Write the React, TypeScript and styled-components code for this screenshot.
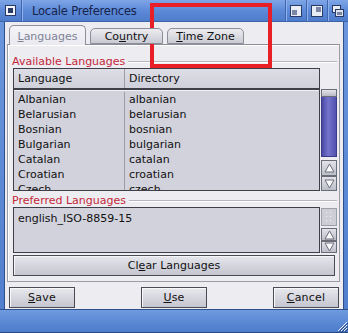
import styled, {createGlobalStyle} from "styled-components";

const GlobalStyle = createGlobalStyle`
  html, body {
    margin: 0;
    padding: 0;
    background: #5a86d2;
  }
  body {
    font-family: "DejaVu Sans", "Liberation Sans", sans-serif;
    font-size: 11px;
  }
`;

const Window = styled.div`
  position: relative;
  width: 348px;
  height: 333px;
  display: flex;
  flex-direction: column;
  background: linear-gradient(to bottom, #6d98de, #4f7dcc);
  overflow: hidden;
`;

const TitleBar = styled.div`
  height: 21px;
  display: flex;
  align-items: center;
  background: linear-gradient(to bottom, #7ea5e6 0%, #5d8ad8 50%, #4e7cca 100%);
  border-bottom: 1px solid #3c64a8;
`;

const TitleIconCell = styled.div`
  width: 21px;
  height: 21px;
  display: flex;
  align-items: center;
  justify-content: center;
  border-right: 1px solid #3f68b0;
  box-shadow: 1px 0 0 #8fb0ea;
`;

const TitleText = styled.div`
  flex: 1;
  padding-left: 10px;
  color: #16234a;
  font-size: 11.5px;
  letter-spacing: -0.2px;
`;

const TitleButton = styled.div`
  width: 20px;
  height: 21px;
  display: flex;
  align-items: center;
  justify-content: center;
  border-left: 1px solid #3f68b0;
  box-shadow: inset 1px 0 0 #8fb0ea;
`;

const Middle = styled.div`
  flex: 1;
  display: flex;
  padding: 0 4px;
`;

const Content = styled.div`
  flex: 1;
  display: flex;
  flex-direction: column;
  background: #ececf1;
  border-left: 1px solid #2e4f8c;
  border-right: 1px solid #2e4f8c;
  padding: 2px 3px 0 2px;
`;

const TabRow = styled.div`
  display: flex;
  align-items: flex-end;
  height: 20px;
  padding-left: 2px;
  gap: 4px;
  position: relative;
  z-index: 1;
`;

const Tab = styled.div<{ $active?: boolean; $w: number }>`
  width: ${p => p.$w}px;
  height: ${p => (p.$active ? 20 : 16)}px;
  margin-bottom: ${p => (p.$active ? -1 : 0)}px;
  box-sizing: border-box;
  display: flex;
  align-items: center;
  justify-content: center;
  border: 1px solid #8c8e9a;
  border-bottom: ${p => (p.$active ? "none" : "1px solid #8c8e9a")};
  border-radius: 5px 5px 0 0;
  background: ${p => (p.$active
    ? "linear-gradient(to bottom, #f4f4f8, #e9e9ef)"
    : "linear-gradient(to bottom, #ececf0, #c9cad3)")};
  color: ${p => (p.$active ? "#7f8396" : "#111")};
  padding-top: ${p => (p.$active ? 1 : 0)}px;
`;

const U = styled.span`
  text-decoration: underline;
`;

const Panel = styled.div`
  height: 238px;
  box-sizing: border-box;
  border: 1px solid #9a9ca6;
  border-top-color: #8c8e9a;
  box-shadow: inset 1px 1px 0 #ffffff;
  padding: 10px 2px 5px 4px;
  display: flex;
  flex-direction: column;
`;

const Legend = styled.div<{ $gap?: number }>`
  height: 13px;
  margin-top: ${p => p.$gap ?? 0}px;
  display: flex;
  align-items: center;
  gap: 3px;
  color: #c4283a;

  &::after {
    content: "";
    flex: 1;
    height: 1px;
    background: #b4b6c0;
    box-shadow: 0 1px 0 #ffffff;
  }
`;

const GroupRow = styled.div`
  display: flex;
  gap: 1px;
  padding-left: 1px;
`;

const TableBox = styled.div`
  flex: 1;
  height: 123px;
  box-sizing: border-box;
  border: 1px solid #3e3f48;
  background: #d1d2dc;
  overflow: hidden;
  display: flex;
  flex-direction: column;
`;

const HeaderRow = styled.div`
  height: 19px;
  flex-shrink: 0;
  display: grid;
  grid-template-columns: 111px 1fr;
  background: linear-gradient(to bottom, #dcdde5, #cfd0da);
  border-bottom: 2px solid #3e3f48;
  box-shadow: 0 1px 0 #f2f2f6;
`;

const HeaderCell = styled.div<{ $divider?: boolean }>`
  display: flex;
  align-items: center;
  padding-left: 4px;
  color: #111;
  border-right: ${p => (p.$divider ? "1px solid #9a9ca8" : "none")};
`;

const Body = styled.div`
  margin-top: 1px;
  padding-top: 1px;
  flex: 1;
  display: grid;
  grid-template-columns: 111px 1fr;
  grid-auto-rows: 15px;
  align-content: start;
`;

const Cell = styled.div<{ $divider?: boolean }>`
  display: flex;
  align-items: center;
  padding-left: 4px;
  color: #111;
  border-right: ${p => (p.$divider ? "1px solid #9a9ca8" : "none")};
  white-space: nowrap;
`;

const ScrollCol = styled.div`
  width: 16px;
  margin-top: 21px;
  display: flex;
  flex-direction: column;
`;

const ScrollCap = styled.div`
  height: 8px;
  box-sizing: border-box;
  border: 1px solid #6a6c78;
  background: linear-gradient(to bottom, #e4e4ea, #b8bac4);
`;

const ScrollThumb = styled.div`
  height: 60px;
  box-sizing: border-box;
  border: 1px solid #3a3a8a;
  border-top: none;
  background: linear-gradient(to right, #4a4aa6, #7474cc 45%, #5252b0);
  margin-bottom: 3px;
`;

const ArrowButton = styled.div<{ $h: number }>`
  height: ${p => p.$h}px;
  box-sizing: border-box;
  border: 1px solid #6a6c78;
  background: linear-gradient(to bottom, #e2e2e8, #bcbec8);
  display: flex;
  align-items: center;
  justify-content: center;
`;

const Grip = styled.div`
  height: 18px;
  box-sizing: border-box;
  border: 1px solid #9c9ea8;
  background: #cdced6;
  margin-top: 1px;
  margin-bottom: 2px;
  display: flex;
  align-items: center;
  justify-content: center;
`;

const ListBox = styled.div`
  flex: 1;
  height: 46px;
  box-sizing: border-box;
  border: 1px solid #3e3f48;
  background: #d1d2dc;
  padding: 3px 4px;
  color: #111;
  line-height: 15px;
`;

const SideCol = styled.div`
  width: 16px;
  display: flex;
  flex-direction: column;
`;

const WideButton = styled.div`
  margin: 2px 2px 0 1px;
  height: 21px;
  box-sizing: border-box;
  border: 1px solid #4a4b55;
  background: linear-gradient(to bottom, #e6e6ec, #c4c5cf);
  box-shadow: inset 1px 1px 0 #f6f6fa;
  display: flex;
  align-items: center;
  justify-content: center;
  color: #111;
`;

const ButtonRow = styled.div`
  display: flex;
  justify-content: space-between;
  padding: 5px 1px 0 2px;
`;

const DialogButton = styled.div`
  width: 66px;
  height: 21px;
  box-sizing: border-box;
  border: 1px solid #4a4b55;
  background: linear-gradient(to bottom, #e8e8ee, #c4c5cf);
  box-shadow: inset 1px 1px 0 #f8f8fb;
  display: flex;
  align-items: center;
  justify-content: center;
  color: #111;
  letter-spacing: 0.2px;
`;

const FooterBar = styled.div`
  height: 22px;
  display: flex;
  justify-content: flex-end;
  align-items: flex-end;
  background: linear-gradient(to bottom, #6e9ae0, #4d7bcb);
  border-top: 1px solid #2e4f8c;
  border-bottom: 1px solid #2a4a86;
`;

const Annotation = styled.div`
  position: absolute;
  left: 150px;
  top: 3px;
  width: 122px;
  height: 65px;
  box-sizing: border-box;
  border: 4px solid #e81f26;
  pointer-events: none;
`;

const languages: [string, string][] = [
  ["Albanian", "albanian"],
  ["Belarusian", "belarusian"],
  ["Bosnian", "bosnian"],
  ["Bulgarian", "bulgarian"],
  ["Catalan", "catalan"],
  ["Croatian", "croatian"],
  ["Czech", "czech"],
];

function UpArrow() {
  return (
    <svg width="11" height="10" viewBox="0 0 11 10">
      <path d="M5.5 1 L10 9 L1 9 Z" fill="#fafafc" stroke="#6c6e7a" strokeWidth="1"/>
    </svg>
  );
}

function DownArrow() {
  return (
    <svg width="11" height="10" viewBox="0 0 11 10">
      <path d="M1 1 L10 1 L5.5 9 Z" fill="#fafafc" stroke="#6c6e7a" strokeWidth="1"/>
    </svg>
  );
}

function GripDots() {
  return (
    <svg width="6" height="12" viewBox="0 0 6 12">
      {[1, 5, 9].map(y => (
        <g key={y}>
          <rect x="0" y={y} width="1" height="1" fill="#f4f4f8"/>
          <rect x="4" y={y} width="1" height="1" fill="#f4f4f8"/>
        </g>
      ))}
    </svg>
  );
}

export default function App() {
  return (
    <>
      <GlobalStyle/>
      <Window>
        <TitleBar>
          <TitleIconCell>
            <svg width="11" height="11" viewBox="0 0 11 11">
              <rect x="0.5" y="0.5" width="10" height="10" fill="#f2f4fa" stroke="#2a3a66"/>
              <rect x="3" y="3" width="5" height="5" fill="#2a3a66"/>
            </svg>
          </TitleIconCell>
          <TitleText>Locale Preferences</TitleText>
          <TitleButton>
            <svg width="12" height="12" viewBox="0 0 12 12">
              <rect x="0.5" y="0.5" width="11" height="11" fill="#e8ecf4" stroke="#2a3a66"/>
              <rect x="2" y="5" width="5" height="5" fill="#7a86a4"/>
            </svg>
          </TitleButton>
          <TitleButton>
            <svg width="12" height="12" viewBox="0 0 12 12">
              <rect x="0.5" y="0.5" width="11" height="11" fill="#e8ecf4" stroke="#2a3a66"/>
              <rect x="5" y="2" width="5" height="5" fill="#7a86a4"/>
            </svg>
          </TitleButton>
          <TitleButton>
            <svg width="12" height="12" viewBox="0 0 12 12">
              <rect x="0.5" y="0.5" width="8" height="7" fill="#e8ecf4" stroke="#2a3a66"/>
              <rect x="3.5" y="4.5" width="8" height="7" fill="#dfe4ee" stroke="#2a3a66"/>
              <rect x="5" y="7" width="5" height="3" fill="#7a86a4"/>
            </svg>
          </TitleButton>
        </TitleBar>
        <Middle>
          <Content>
            <TabRow>
              <Tab $active $w={77}><span><U>L</U>anguages</span></Tab>
              <Tab $w={73}><span>Co<U>u</U>ntry</span></Tab>
              <Tab $w={77}><span><U>T</U>ime Zone</span></Tab>
            </TabRow>
            <Panel>
              <Legend>Available Languages</Legend>
              <GroupRow>
                <TableBox>
                  <HeaderRow>
                    <HeaderCell $divider>Language</HeaderCell>
                    <HeaderCell>Directory</HeaderCell>
                  </HeaderRow>
                  <Body>
                    {languages.flatMap(([name, dir]) => [
                      <Cell key={name} $divider>{name}</Cell>,
                      <Cell key={dir}>{dir}</Cell>,
                    ])}
                  </Body>
                </TableBox>
                <ScrollCol>
                  <ScrollCap/>
                  <ScrollThumb/>
                  <ArrowButton $h={16}><UpArrow/></ArrowButton>
                  <ArrowButton $h={15}><DownArrow/></ArrowButton>
                </ScrollCol>
              </GroupRow>
              <Legend $gap={3}>Preferred Languages</Legend>
              <GroupRow>
                <ListBox>english_ISO-8859-15</ListBox>
                <SideCol>
                  <Grip><GripDots/></Grip>
                  <ArrowButton $h={13}><UpArrow/></ArrowButton>
                  <ArrowButton $h={12}><DownArrow/></ArrowButton>
                </SideCol>
              </GroupRow>
              <WideButton><span>Cl<U>e</U>ar Languages</span></WideButton>
            </Panel>
            <ButtonRow>
              <DialogButton><span><U>S</U>ave</span></DialogButton>
              <DialogButton><span><U>U</U>se</span></DialogButton>
              <DialogButton><span><U>C</U>ancel</span></DialogButton>
            </ButtonRow>
          </Content>
        </Middle>
        <FooterBar>
          <svg width="12" height="12" viewBox="0 0 12 12">
            <path d="M11 2 L2 11 M11 5 L5 11 M11 8 L8 11" stroke="#f0f4fc" strokeWidth="1"/>
            <path d="M12 3 L3 12 M12 6 L6 12 M12 9 L9 12" stroke="#2a4a86" strokeWidth="1"/>
          </svg>
        </FooterBar>
        <Annotation/>
      </Window>
    </>
  );
}
